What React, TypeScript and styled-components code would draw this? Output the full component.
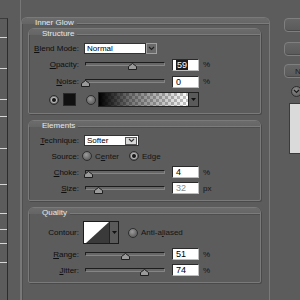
import React from "react";
import styled, { createGlobalStyle } from "styled-components";

const FONT = `"Liberation Sans", Arial, sans-serif`;

const GlobalStyle = createGlobalStyle`
  html, body { margin: 0; padding: 0; background: #5c5c5c; }
  body { font-family: ${FONT}; }
  * { box-sizing: border-box; }
`;

const Screen = styled.div`
  width: 300px;
  height: 300px;
  overflow: hidden;
  display: flex;
  align-items: flex-start;
  background: #5c5c5c;
  font-family: ${FONT};
  font-size: 8px;
  color: #111;
`;

const StyleList = styled.div`
  flex: none;
  width: 8px;
  height: 282px;
  margin-top: 18px;
  border-top: 1px solid #3c3c3c;
  border-right: 1px solid #2c2c2c;
  display: flex;
  flex-direction: column;
`;

const ListItem = styled.div<{ $h: number }>`
  flex: none;
  height: ${(p) => p.$h}px;
  border-bottom: 1px solid #d6d6d6;
`;

const Main = styled.div`
  flex: none;
  width: 250px;
  height: 300px;
  margin-left: 12px;
  padding-top: 17px;
  border-left: 1px solid #777;
`;

const OuterGroup = styled.div`
  width: 249px;
  height: 290px;
  border: 1px solid #797979;
  border-bottom: none;
  border-radius: 6px 6px 0 0;
  box-shadow: inset 1px 1px 0 #4e4e4e;
`;

const GroupHeader = styled.div`
  height: 10px;
  display: flex;
  align-items: flex-start;
  padding-left: 13px;
  border-radius: 5px 5px 0 0;
  background: linear-gradient(#6c6c6c 0, #656565 6px, transparent 6px);
`;

const GroupTitle = styled.span`
  font-size: 8px;
  line-height: 10px;
  color: #e2e8ef;
  padding-right: 3px;
  white-space: nowrap;
`;

const GroupRule = styled.span`
  flex: 1;
  height: 1px;
  margin-top: 5px;
  background: #7c7c7c;
  box-shadow: 0 1px 0 #4e4e4e;
`;

const GroupBody = styled.div`
  display: flex;
  flex-direction: column;
  gap: 6px;
  padding: 0 8px 0 6px;
`;

const Section = styled.div<{ $h: number }>`
  flex: none;
  width: 233px;
  height: ${(p) => p.$h}px;
  border: 1px solid #7a7a7a;
  border-radius: 6px 6px 2px 2px;
  box-shadow: inset 1px 1px 0 #4e4e4e, 1px 1px 0 #4a4a4a;
`;

const SectionBody = styled.div<{ $pt: number }>`
  display: flex;
  flex-direction: column;
  gap: 4px;
  padding: ${(p) => p.$pt}px 0 0 1px;
`;

const Row = styled.div<{ $h: number }>`
  flex: none;
  display: flex;
  align-items: center;
  height: ${(p) => p.$h}px;
`;

const Label = styled.span`
  flex: none;
  width: 49px;
  margin-right: 5px;
  text-align: right;
  white-space: nowrap;
  font-size: 8px;
  color: #0e0e0e;
`;

const Key = styled.span`
  text-decoration: underline;
  text-underline-offset: 1px;
`;

const SliderBox = styled.div`
  position: relative;
  flex: none;
  width: 80px;
  height: 13px;
  margin: 0 7px 0 1px;
`;

const Track = styled.div`
  margin-top: 4px;
  height: 4px;
  border: 1px solid #1d1d1d;
  border-bottom-color: #858585;
  border-right-color: #858585;
  background: #676767;
  border-radius: 1px;
`;

const ThumbSvg = styled.svg`
  position: absolute;
  top: 5px;
`;

const NumBox = styled.div<{ $muted?: boolean }>`
  flex: none;
  width: 27px;
  height: 12px;
  padding-left: 3px;
  display: flex;
  align-items: center;
  background: #fff;
  border: 1px solid #2a2a2a;
  border-right-color: #bdbdbd;
  border-bottom-color: #bdbdbd;
  font-size: 9px;
  color: ${(p) => (p.$muted ? "#8a8a8a" : "#000")};
`;

const Selected = styled.span`
  background: #1b1b1b;
  color: #fff;
  padding: 0 1px;
`;

const Unit = styled.span`
  margin-left: 4px;
  font-size: 8px;
  color: #141414;
`;

const SelectField = styled.div<{ $w: number }>`
  flex: none;
  display: flex;
  align-items: center;
  width: ${(p) => p.$w}px;
  height: 11px;
  padding-left: 2px;
  background: #fff;
  border: 1px solid #333;
  font-size: 8px;
  color: #000;
`;

const SelectButton = styled.div<{ $inner?: boolean }>`
  flex: none;
  width: ${(p) => (p.$inner ? 12 : 11)}px;
  height: ${(p) => (p.$inner ? 8 : 11)}px;
  margin-left: ${(p) => (p.$inner ? "auto" : "0")};
  margin-right: ${(p) => (p.$inner ? "1px" : "0")};
  display: flex;
  align-items: center;
  justify-content: center;
  background: ${(p) => (p.$inner ? "#d8d8d8" : "#6a6a6a")};
  border: 1px solid ${(p) => (p.$inner ? "#555" : "#a0a0a0")};
`;

const Radio = styled.span<{ $on?: boolean; $ml?: number }>`
  flex: none;
  position: relative;
  width: 10px;
  height: 10px;
  margin-left: ${(p) => p.$ml ?? 0}px;
  border-radius: 50%;
  border: 1px solid #2e2e2e;
  background: radial-gradient(circle at 40% 35%, #9c9c9c 0, #6a6a6a 60%, #505050 100%);
  &::after {
    content: "";
    display: ${(p) => (p.$on ? "block" : "none")};
    position: absolute;
    left: 2px;
    top: 2px;
    width: 4px;
    height: 4px;
    border-radius: 50%;
    background: #151515;
    box-shadow: 0 0 0 1px #b8b8b8;
  }
`;

const OptionText = styled.span<{ $mr?: number }>`
  margin-left: 3px;
  margin-right: ${(p) => p.$mr ?? 0}px;
  font-size: 8px;
  color: #141414;
  white-space: nowrap;
`;

const Swatch = styled.div`
  flex: none;
  width: 13px;
  height: 13px;
  margin: 0 10px 0 4px;
  background: #111;
  border: 1px solid #2a2a2a;
`;

const GradientPicker = styled.div`
  flex: none;
  display: flex;
  height: 15px;
  margin-left: 2px;
  border: 1px solid #222;
`;

const GradientStrip = styled.div`
  width: 89px;
  height: 13px;
  background: linear-gradient(to right, #000 0%, rgba(0, 0, 0, 0.55) 35%, rgba(0, 0, 0, 0) 100%),
    repeating-conic-gradient(#c4c4c4 0 25%, #fff 0 50%) 0 0 / 6px 6px;
`;

const DarkButton = styled.div<{ $w: number }>`
  width: ${(p) => p.$w}px;
  display: flex;
  align-items: center;
  justify-content: center;
  background: #5a5a5a;
  border-left: 1px solid #222;
`;

const ContourPicker = styled.div`
  flex: none;
  display: flex;
  height: 23px;
  margin-left: -1px;
  border: 1px solid #1c1c1c;
`;

const Side = styled.div`
  flex: none;
  width: 70px;
  margin-left: 14px;
  display: flex;
  flex-direction: column;
  align-items: flex-start;
`;

const DlgButton = styled.div<{ $mt: number }>`
  flex: none;
  width: 70px;
  height: 14px;
  margin-top: ${(p) => p.$mt}px;
  border: 1px solid #7f7f7f;
  border-radius: 4px;
  background: linear-gradient(#666, #5a5a5a);
  box-shadow: inset 0 -1px 0 #4a4a4a;
  display: flex;
  align-items: center;
  justify-content: flex-start;
  padding-left: 10px;
  font-size: 8px;
  color: #1a1e30;
  white-space: nowrap;
`;

const MoreCircle = styled.div`
  flex: none;
  width: 11px;
  height: 11px;
  margin: 8px 0 0 7px;
  border-radius: 50%;
  border: 1px solid #2e2e2e;
  background: radial-gradient(circle at 40% 35%, #8e8e8e, #555);
  display: flex;
  align-items: center;
  justify-content: center;
`;

const Preview = styled.div`
  flex: none;
  width: 20px;
  height: 51px;
  margin: 6px 0 0 5px;
  background: #dadada;
  border: 1px solid #3a3a3a;
`;

const Chevron = ({ c = "#222" }: { c?: string }) => (
  <svg width="7" height="5" viewBox="0 0 7 5">
    <path d="M1 1 L3.5 3.5 L6 1" fill="none" stroke={c} strokeWidth="1.2" />
  </svg>
);

const DownTri = ({ c = "#111" }: { c?: string }) => (
  <svg width="5" height="3" viewBox="0 0 5 3">
    <path d="M0 0 H5 L2.5 3 Z" fill={c} />
  </svg>
);

const Slider = ({ pct }: { pct: number }) => (
  <SliderBox>
    <Track />
    <ThumbSvg width="9" height="7" viewBox="0 0 9 7" style={{ left: `${(pct / 100) * 80 - 4.5}px` }}>
      <path d="M4.5 0.5 L8.5 3.5 V6.5 H0.5 V3.5 Z" fill="#9a9a9a" stroke="#1e1e1e" strokeWidth="1" />
    </ThumbSvg>
  </SliderBox>
);

const ticks = [37, 68, 99, 116, 148, 184, 213, 229, 243, 262];

export default function App() {
  let prev = 18;
  const heights = ticks.map((t) => {
    const h = t - prev;
    prev = t;
    return h;
  });

  return (
    <>
      <GlobalStyle />
      <Screen>
        <StyleList>
          {heights.map((h, i) => (
            <ListItem key={i} $h={h} />
          ))}
        </StyleList>

        <Main>
          <OuterGroup>
            <GroupHeader>
              <GroupTitle>Inner Glow</GroupTitle>
              <GroupRule />
            </GroupHeader>
            <GroupBody>
              <Section $h={86}>
                <GroupHeader>
                  <GroupTitle>Structure</GroupTitle>
                  <GroupRule />
                </GroupHeader>
                <SectionBody $pt={3}>
                  <Row $h={12}>
                    <Label>
                      <Key>B</Key>lend Mode:
                    </Label>
                    <SelectField $w={62}>Normal</SelectField>
                    <SelectButton>
                      <Chevron />
                    </SelectButton>
                  </Row>
                  <Row $h={13}>
                    <Label>
                      <Key>O</Key>pacity:
                    </Label>
                    <Slider pct={59} />
                    <NumBox>
                      <Selected>59</Selected>
                    </NumBox>
                    <Unit>%</Unit>
                  </Row>
                  <Row $h={13}>
                    <Label>
                      <Key>N</Key>oise:
                    </Label>
                    <Slider pct={0} />
                    <NumBox>0</NumBox>
                    <Unit>%</Unit>
                  </Row>
                  <Row $h={15}>
                    <Radio $on $ml={19} />
                    <Swatch />
                    <Radio />
                    <GradientPicker>
                      <GradientStrip />
                      <DarkButton $w={10}>
                        <DownTri />
                      </DarkButton>
                    </GradientPicker>
                  </Row>
                </SectionBody>
              </Section>

              <Section $h={81}>
                <GroupHeader>
                  <GroupTitle>Elements</GroupTitle>
                  <GroupRule />
                </GroupHeader>
                <SectionBody $pt={4}>
                  <Row $h={11}>
                    <Label>
                      <Key>T</Key>echnique:
                    </Label>
                    <SelectField $w={55}>
                      Softer
                      <SelectButton $inner>
                        <Chevron c="#333" />
                      </SelectButton>
                    </SelectField>
                  </Row>
                  <Row $h={12}>
                    <Label>Source:</Label>
                    <Radio $ml={-2} />
                    <OptionText $mr={10}>
                      C<Key>e</Key>nter
                    </OptionText>
                    <Radio $on />
                    <OptionText>Edge</OptionText>
                  </Row>
                  <Row $h={12}>
                    <Label>
                      <Key>C</Key>hoke:
                    </Label>
                    <Slider pct={4} />
                    <NumBox>4</NumBox>
                    <Unit>%</Unit>
                  </Row>
                  <Row $h={12}>
                    <Label>
                      <Key>S</Key>ize:
                    </Label>
                    <Slider pct={17} />
                    <NumBox $muted>32</NumBox>
                    <Unit>px</Unit>
                  </Row>
                </SectionBody>
              </Section>

              <Section $h={76}>
                <GroupHeader>
                  <GroupTitle>Quality</GroupTitle>
                  <GroupRule />
                </GroupHeader>
                <SectionBody $pt={3}>
                  <Row $h={23}>
                    <Label>Contour:</Label>
                    <ContourPicker>
                      <svg width="25" height="21" viewBox="0 0 25 21">
                        <rect width="25" height="21" fill="#fff" />
                        <path d="M2 21 L25 0 V21 Z" fill="#3a3a3a" />
                      </svg>
                      <DarkButton $w={9}>
                        <DownTri />
                      </DarkButton>
                    </ContourPicker>
                    <Radio $ml={9} />
                    <OptionText>
                      Anti-a<Key>l</Key>iased
                    </OptionText>
                  </Row>
                  <Row $h={12}>
                    <Label>
                      <Key>R</Key>ange:
                    </Label>
                    <Slider pct={51} />
                    <NumBox>51</NumBox>
                    <Unit>%</Unit>
                  </Row>
                  <Row $h={12}>
                    <Label>
                      <Key>J</Key>itter:
                    </Label>
                    <Slider pct={74} />
                    <NumBox>74</NumBox>
                    <Unit>%</Unit>
                  </Row>
                </SectionBody>
              </Section>
            </GroupBody>
          </OuterGroup>
        </Main>

        <Side>
          <DlgButton $mt={18} />
          <DlgButton $mt={10} />
          <DlgButton $mt={8}>New Style...</DlgButton>
          <MoreCircle>
            <Chevron c="#1a1a1a" />
          </MoreCircle>
          <Preview />
        </Side>
      </Screen>
    </>
  );
}
